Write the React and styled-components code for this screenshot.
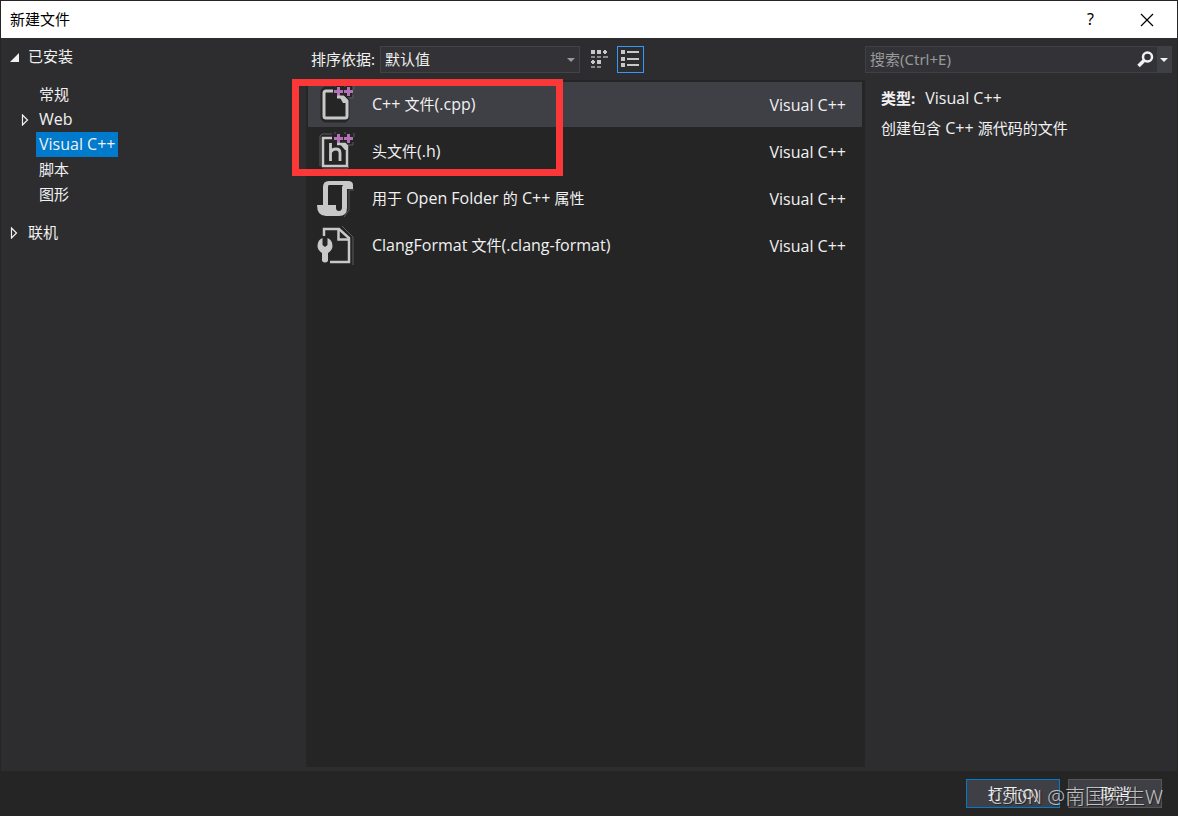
import React, { useState } from 'react';
import styled, { createGlobalStyle, css } from 'styled-components';

const GlobalStyle = createGlobalStyle`
  * {
    box-sizing: border-box;
  }

  body {
    margin: 0;
    background: #252526;
    color: #f1f1f1;
    font: 15px/25px 'Noto Sans', 'Noto Sans CJK SC', sans-serif;
  }

  button, input, select {
    margin: 0;
    color: inherit;
    font: inherit;
  }
`;

const Dialog = styled.div`
  position: relative;
  min-height: 100vh;
  display: flex;
  flex-direction: column;
  border: 1px solid #252526;
`;

const TitleBar = styled.header`
  height: 37px;
  padding: 0 8px 0 9px;
  display: flex;
  align-items: center;
  background: #fff;
  color: #000;
`;

const Title = styled.h1`
  flex: 1;
  margin: 0;
  font-size: 15px;
  font-weight: 400;
`;

const CaptionButton = styled.button`
  width: 57px;
  height: 37px;
  padding: 0;
  display: flex;
  align-items: center;
  justify-content: center;
  border: none;
  background: none;
  font-size: 16px;

  &:last-child {
    width: 44px;
    margin-left: 6px;
  }
`;

const Content = styled.main`
  flex: 1;
  display: grid;
  grid-template-columns: 305fr 559fr 312fr;
  padding-bottom: 4px;
  background: #2d2d30;
`;

const Sidebar = styled.nav`
  padding: 6px 8px;
`;

const Tree = styled.ul`
  margin: 0;
  padding: 0;
  list-style: none;
`;

const SubTree = styled(Tree)`
  padding: 13px 0 13px 11px;
`;

const TreeNode = styled.div`
  display: flex;
  align-items: center;
`;

const Expander = styled.svg`
  flex: none;
  width: 12px;
  height: 12px;
  margin-right: 4px;
`;

const TreeLabel = styled.button`
  height: 25px;
  padding: 0 3px;
  border: none;
  background: ${props => props.$selected ? '#007acc' : 'none'};
`;

const Center = styled.section`
  display: flex;
  flex-direction: column;
`;

const Toolbar = styled.div`
  height: 42px;
  padding-left: 5px;
  display: flex;
  align-items: center;
`;

const SelectBox = styled.div`
  position: relative;
  width: 200px;
  margin: 0 6px 0 5px;

  svg {
    position: absolute;
    top: 12px;
    right: 5px;
    pointer-events: none;
  }
`;

const Select = styled.select`
  display: block;
  width: 100%;
  height: 27px;
  padding: 0 4px;
  appearance: none;
  border: 1px solid #434346;
  border-radius: 0;
  background: #333337;
`;

const ViewButton = styled.button`
  width: 27px;
  height: 27px;
  margin-right: 4px;
  padding: 0;
  display: flex;
  align-items: center;
  justify-content: center;
  border: 1px solid ${props => props.$active ? '#3399ff' : 'transparent'};
  background: none;
`;

const ListPanel = styled.div`
  position: relative;
  flex: 1;
  padding: 2px 3px 2px 2px;
  background: #252526;
`;

const TemplateList = styled.ul`
  margin: 0;
  padding: 0;
  display: grid;
  gap: 2px;
  list-style: none;
`;

const TemplateRow = styled.button`
  width: 100%;
  height: 45px;
  padding: 0 16px 0 8px;
  display: flex;
  align-items: center;
  border: none;
  background: none;
  text-align: left;

  ${props => props.$selected && css`
    background: #3f3f46;
  `}
`;

const TemplateIcon = styled.svg`
  flex: none;
  width: 40px;
  height: 40px;
`;

const TemplateName = styled.span`
  flex: 1;
  padding-left: 16px;
`;

const Highlight = styled.div`
  position: absolute;
  top: -1px;
  left: -14px;
  width: 271px;
  height: 97px;
  border: 7px solid #fc3737;
  pointer-events: none;
`;

const Details = styled.aside`
  padding: 8px 5px 0 0;
`;

const SearchBox = styled.div`
  height: 27px;
  display: flex;
  border: 1px solid #3f3f46;
  background: #333337;
`;

const SearchInput = styled.input`
  flex: 1;
  min-width: 0;
  padding: 0 4px;
  border: none;
  outline: none;
  background: none;

  &::placeholder {
    color: #999;
    opacity: 1;
  }
`;

const SearchButton = styled.button`
  width: ${props => props.$narrow ? '14px' : '24px'};
  padding: 0;
  display: flex;
  align-items: center;
  justify-content: center;
  border: none;
  background: ${props => props.$narrow ? '#3f3f46' : 'none'};
`;

const Description = styled.div`
  padding: 13px 16px;

  p {
    margin: 0 0 5px;
  }

  strong {
    margin-right: 10px;
  }
`;

const Footer = styled.footer`
  height: 44px;
  padding: 8px 15px 0;
  display: flex;
  justify-content: flex-end;
  gap: 8px;
`;

const FooterButton = styled.button`
  width: 94px;
  height: 29px;
  padding: 0;
  border: 1px solid ${props => props.$primary ? '#007acc' : '#555'};
  background: #3f3f46;
`;

const Watermark = styled.div`
  position: absolute;
  right: 14px;
  bottom: 6px;
  color: rgba(255, 255, 255, .7);
  font-size: 20px;
  font-weight: 300;
  text-shadow: 1px 1px 1px #222;
  white-space: nowrap;
  pointer-events: none;
`;

const Latin = styled.span`
  font-family: 'Open Sans', sans-serif;
  font-size: 16px;
  line-height: 1;
`;

// Latin runs are set one size up from the Chinese text around them
const MixedText = ({ children }) => (
  children.split(/([\u4e00-\u9fff]+)/).map((part, i) => (
    i % 2 ? part : part && <Latin key={i}>{part}</Latin>
  ))
);

const ExpandedArrow = () => (
  <Expander viewBox="0 0 12 12"><path d="M10 2v9H1z" fill="#f1f1f1" /></Expander>
);

const CollapsedArrow = () => (
  <Expander viewBox="0 0 12 12"><path d="M2.5 1v10L7.5 6z" fill="none" stroke="#f1f1f1" strokeWidth="1.2" /></Expander>
);

const PlusPlus = () => (
  <>
    <path d="M17 1h19v11H19z" fill="#252526" />
    <path d="M32 13h5v-3M38 5V1M20 1h-2M28 1h2" fill="none" stroke="#5a5a5e" />
    <path d="M21 2h3v3h3v3h-3v3h-3V8h-3V5h3zM31 2h3v3h3v3h-3v3h-3V8h-3V5h3z" fill="#b571b8" />
  </>
);

const CppIcon = () => (
  <TemplateIcon viewBox="0 0 40 40">
    <path d="M8 2h11l14 10v22l-3 3H8l-3-3V5z" fill="#252526" stroke="#29292b" />
    <PlusPlus />
    <path d="M17 6H10Q8 6 8 8V31Q8 33 10 33H29Q31 33 31 31V16L27 12H21" fill="none" stroke="#c8c8c8" strokeWidth="3" />
    <path d="M23 11h5l4 4v3h-5z" fill="#c8c8c8" />
  </TemplateIcon>
);

const HeaderIcon = () => (
  <TemplateIcon viewBox="0 0 40 40">
    <path d="M4 34V4l2-2h10M7 37h23l3-2" fill="none" stroke="#5a5a5e" />
    <PlusPlus />
    <path d="M16 6H7V34H31V14L29 12H21" fill="none" stroke="#c8c8c8" strokeWidth="2.500" />
    <path d="M23 11h5l4 4v3h-3z" fill="#c8c8c8" />
    <path d="M14.500 11v18M15 20q1-3 5-3t4 4v8" fill="none" stroke="#c8c8c8" strokeWidth="2.800" />
  </TemplateIcon>
);

const ScrollIcon = () => (
  <TemplateIcon viewBox="0 0 40 40">
    <path d="M38 11H33V31L28 38" fill="none" stroke="#5a5a5e" />
    <path d="M7 26V8Q7 2 13 2H32Q37 2 37 6V10H31V29Q31 37 23 37H10Q1 37 1 26H20V29Q20 32 23 32Q26 32 26 28V8L27 6H13Q12 6 12 8V26z" fill="#c8c8c8" fillRule="evenodd" />
  </TemplateIcon>
);

const WrenchFileIcon = () => (
  <TemplateIcon viewBox="0 0 40 40">
    <path d="M26 0L37 11V39" fill="none" stroke="#5a5a5e" />
    <path d="M8 10V3H23L33 12V36H14" fill="none" stroke="#c8c8c8" strokeWidth="2.500" />
    <path d="M22.500 3v10.500h10" fill="none" stroke="#c8c8c8" strokeWidth="2.500" />
    <path d="M6.500 12v7l2.500 2 2.500-2v-7q5 2 5 8 0 4-4.500 7v8q-3 3-6 0v-8q-4.500-3-4.500-7 0-6 5-8z" fill="#c8c8c8" />
  </TemplateIcon>
);

const templates = [
  { name: 'C++ 文件(.cpp)', Icon: CppIcon },
  { name: '头文件(.h)', Icon: HeaderIcon },
  { name: '用于 Open Folder 的 C++ 属性', Icon: ScrollIcon },
  { name: 'ClangFormat 文件(.clang-format)', Icon: WrenchFileIcon },
];

const categories = ['常规', 'Web', 'Visual C++', '脚本', '图形'];

export default function App() {
  const [category, setCategory] = useState('Visual C++');
  const [selected, setSelected] = useState(0);

  return (
    <Dialog>
      <GlobalStyle />
      <TitleBar>
        <Title>新建文件</Title>
        <CaptionButton aria-label="帮助">?</CaptionButton>
        <CaptionButton aria-label="关闭">
          <svg width="14" height="14" viewBox="0 0 14 14">
            <path d="M1 1l12 12M13 1L1 13" stroke="#000" strokeWidth="1.200" />
          </svg>
        </CaptionButton>
      </TitleBar>
      <Content>
        <Sidebar>
          <Tree>
            <li>
              <TreeNode><ExpandedArrow /><TreeLabel>已安装</TreeLabel></TreeNode>
              <SubTree>
                {categories.map(name => (
                  <li key={name}>
                    <TreeNode>
                      {name === 'Web' ? <CollapsedArrow /> : <Expander />}
                      <TreeLabel $selected={name === category} onClick={() => setCategory(name)}>
                        <MixedText>{name}</MixedText>
                      </TreeLabel>
                    </TreeNode>
                  </li>
                ))}
              </SubTree>
            </li>
            <li>
              <TreeNode><CollapsedArrow /><TreeLabel>联机</TreeLabel></TreeNode>
            </li>
          </Tree>
        </Sidebar>
        <Center>
          <Toolbar>
            <label htmlFor="sort">排序依据:</label>
            <SelectBox>
              <Select id="sort"><option>默认值</option></Select>
              <svg width="8" height="4" viewBox="0 0 8 4"><path d="M0 0h8L4 4z" fill="#999" /></svg>
            </SelectBox>
            <ViewButton aria-label="小图标">
              <svg width="17" height="19" viewBox="0 0 17 19" fill="#c8c8c8">
                <path d="M0 0h4v4H0zM6 0h4v4H6zM13 0h2v1h1v2h-1v1h-2V3h-1V1h1zM1 10h2v1h1v2H3v1H1v-1H0v-2h1zM6 10h4v4H6z" />
                <path d="M0 6h4v2H0zM6 6h4v2H6zM12 6h5v2h-5zM0 16h4v2H0zM6 16h4v2H6z" opacity=".6" />
              </svg>
            </ViewButton>
            <ViewButton $active aria-label="列表">
              <svg width="19" height="18" viewBox="0 0 19 18" fill="#c8c8c8">
                <path d="M0 0h4v4H0zM0 7h4v4H0zM0 13h4v4H0zM6 1h12v2H6zM6 8h12v2H6zM6 14h12v2H6z" />
              </svg>
            </ViewButton>
          </Toolbar>
          <ListPanel>
            <TemplateList>
              {templates.map(({ name, Icon }, i) => (
                <li key={name}>
                  <TemplateRow $selected={i === selected} onClick={() => setSelected(i)}>
                    <Icon />
                    <TemplateName><MixedText>{name}</MixedText></TemplateName>
                    <Latin>Visual C++</Latin>
                  </TemplateRow>
                </li>
              ))}
            </TemplateList>
            <Highlight />
          </ListPanel>
        </Center>
        <Details>
          <SearchBox>
            <SearchInput type="text" aria-label="搜索" placeholder="搜索(Ctrl+E)" />
            <SearchButton aria-label="开始搜索">
              <svg width="17" height="17" viewBox="0 0 17 17" fill="none" stroke="#f1f1f1">
                <circle cx="10.500" cy="6" r="4.500" strokeWidth="2.500" />
                <path d="M7 9.500L1.500 15" strokeWidth="3.500" />
              </svg>
            </SearchButton>
            <SearchButton $narrow aria-label="搜索选项">
              <svg width="8" height="4" viewBox="0 0 8 4"><path d="M0 0h8L4 4z" fill="#f1f1f1" /></svg>
            </SearchButton>
          </SearchBox>
          <Description>
            <p><strong>类型:</strong><Latin>Visual C++</Latin></p>
            <p><MixedText>创建包含 C++ 源代码的文件</MixedText></p>
          </Description>
        </Details>
      </Content>
      <Footer>
        <FooterButton $primary>打开(O)</FooterButton>
        <FooterButton>取消</FooterButton>
      </Footer>
      <Watermark>CSDN @南国先生W</Watermark>
    </Dialog>
  );
}
